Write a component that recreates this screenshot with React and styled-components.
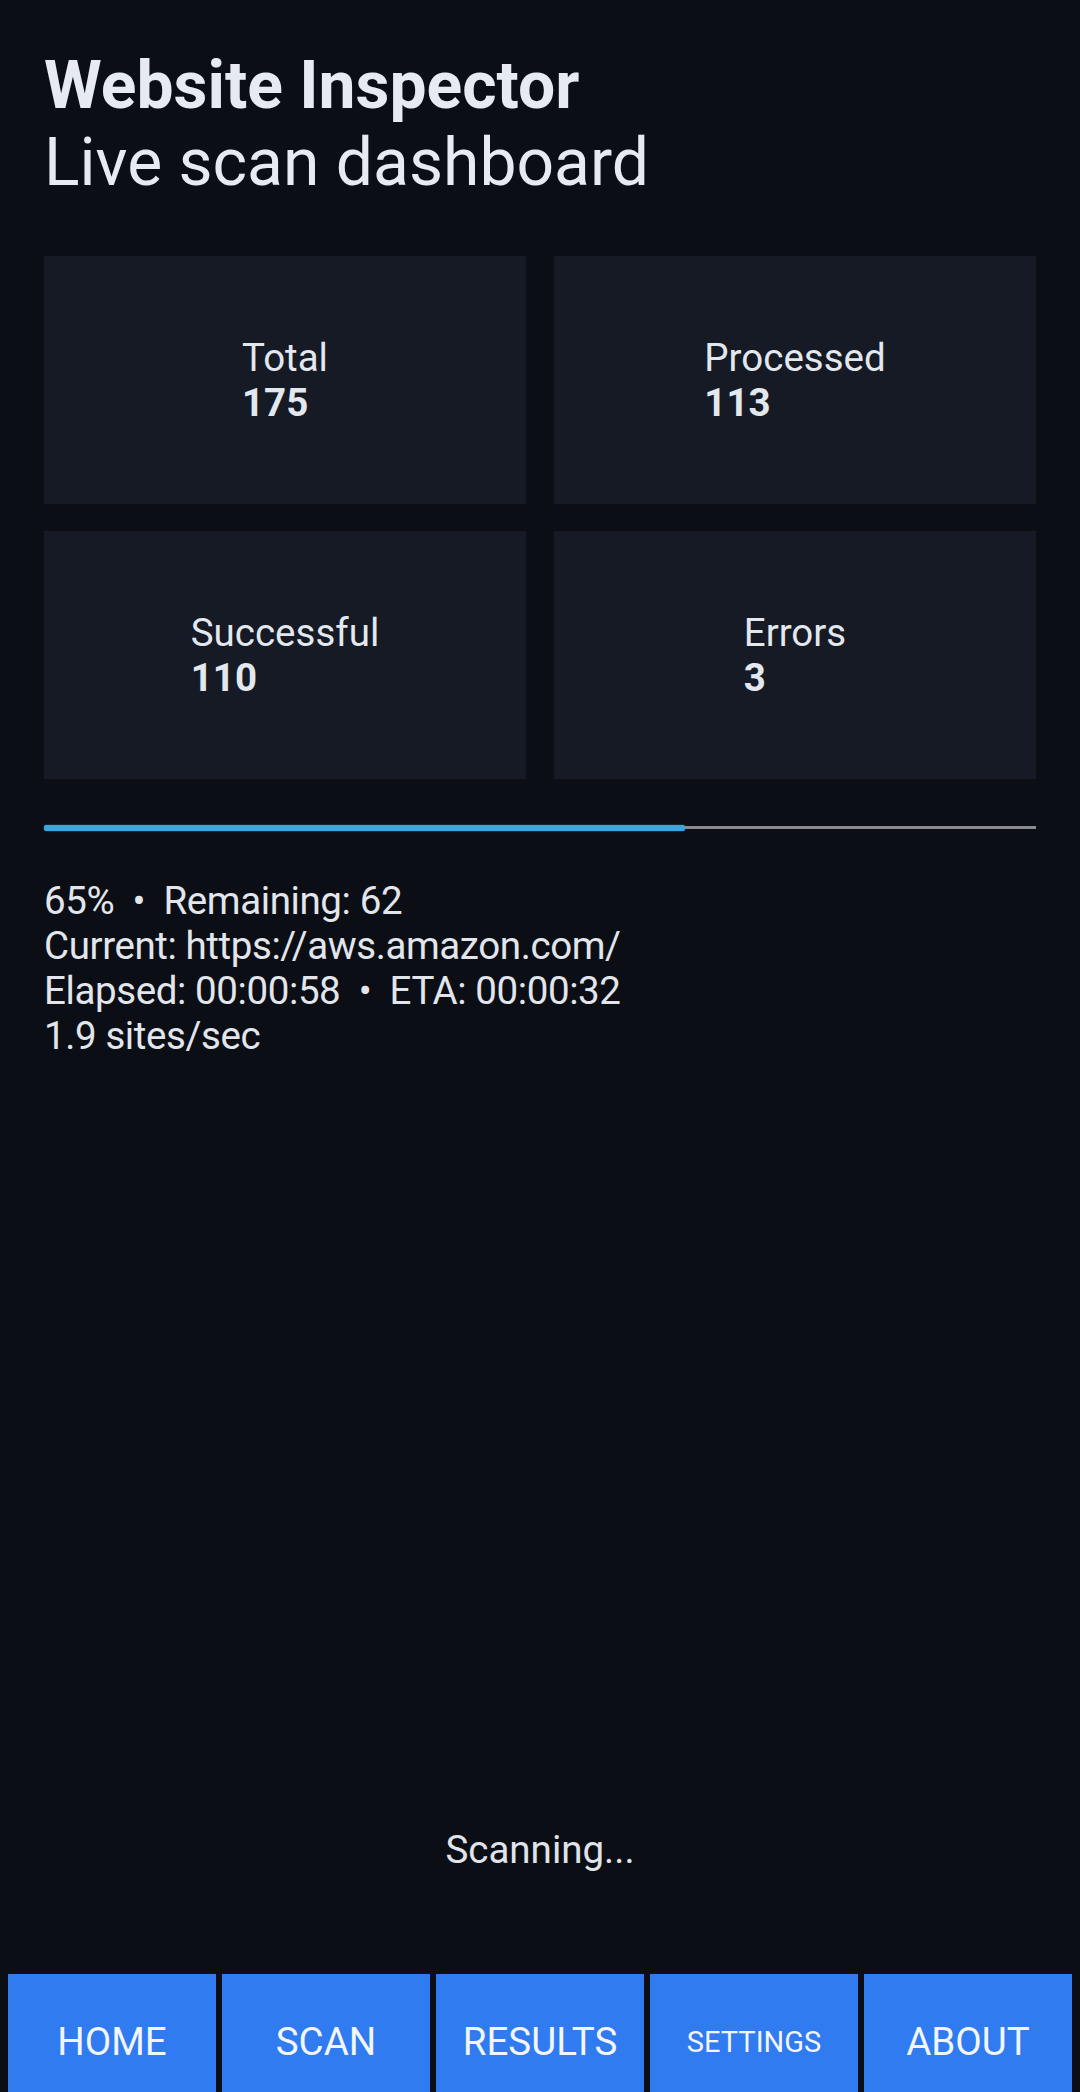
import React from "react";
import styled, { createGlobalStyle } from "styled-components";

const Global = createGlobalStyle`
  html, body { margin: 0; padding: 0; background: #0b0e14; }
  body { font-family: Roboto, "Noto Sans", "Liberation Sans", sans-serif; }
  * { box-sizing: border-box; }
`;

const Screen = styled.div`
  width: 1080px;
  height: 2092px;
  overflow: hidden;
  background: #0b0e14;
  color: #e4e8ef;
  display: flex;
  flex-direction: column;
  padding-top: 47px;
`;

const Content = styled.main`
  padding: 0 44px;
  display: flex;
  flex-direction: column;
`;

const Title = styled.h1`
  margin: 0;
  font-size: 66px;
  font-weight: 700;
  line-height: 77px;
  color: #e6eaf2;
`;

const Subtitle = styled.h2`
  margin: 0;
  font-size: 66px;
  font-weight: 400;
  line-height: 78px;
  color: #e6eaf2;
`;

const StatsGrid = styled.section`
  margin-top: 54px;
  display: grid;
  grid-template-columns: 1fr 1fr;
  column-gap: 28px;
  row-gap: 27px;
`;

const Card = styled.div`
  height: 248px;
  background: #151a24;
  display: flex;
  align-items: center;
  justify-content: center;
`;

const CardBody = styled.div`
  display: flex;
  flex-direction: column;
  align-items: flex-start;
  font-size: 38.5px;
  line-height: 45px;
  color: #e3e7ee;
`;

const Label = styled.span`
  font-weight: 400;
`;

const Value = styled.span`
  font-weight: 700;
`;

const Progress = styled.div`
  margin-top: 45px;
  height: 7px;
  display: flex;
  align-items: center;
`;

const Fill = styled.div`
  height: 6px;
  background: #3aa6dd;
  border-radius: 2px;
  box-shadow: 0 0 2px rgba(58, 166, 221, 0.6);
`;

const Track = styled.div`
  flex: 1;
  height: 3px;
  background: #8a8b8d;
`;

const Status = styled.div`
  margin-top: 47px;
  display: flex;
  flex-direction: column;
  font-size: 38.5px;
  line-height: 45px;
  letter-spacing: -0.4px;
  color: #e2e6ec;
  white-space: pre;
`;

const Spacer = styled.div`
  flex: 1;
`;

const Scanning = styled.div`
  text-align: center;
  font-size: 38.5px;
  line-height: 45px;
  color: #e0e4ea;
  margin-bottom: 102px;
`;

const Nav = styled.nav`
  display: flex;
  gap: 6px;
  padding: 0 8px;
  height: 118px;
  flex-shrink: 0;
`;

const NavButton = styled.button`
  flex: 1;
  border: none;
  border-radius: 0;
  margin: 0;
  background: #2f7bef;
  color: #f2f5fb;
  font-family: Roboto, "Noto Sans", "Liberation Sans", sans-serif;
  font-size: ${(p) => (p.$small ? "29px" : "38.5px")};
  line-height: 45px;
  padding: ${(p) => (p.$small ? "46px 0 0" : "45px 0 0")};
  display: flex;
  align-items: flex-start;
  justify-content: center;
  text-transform: uppercase;
`;

const stats = [
  { label: "Total", value: 175 },
  { label: "Processed", value: 113 },
  { label: "Successful", value: 110 },
  { label: "Errors", value: 3 },
];

const navItems = [
  { label: "Home" },
  { label: "Scan" },
  { label: "Results" },
  { label: "Settings", small: true },
  { label: "About" },
];

export default function App() {
  const percent = (113 / 175) * 100;
  return (
    <>
      <Global />
      <Screen>
        <Content>
          <Title>Website Inspector</Title>
          <Subtitle>Live scan dashboard</Subtitle>
          <StatsGrid>
            {stats.map((s) => (
              <Card key={s.label}>
                <CardBody>
                  <Label>{s.label}</Label>
                  <Value>{s.value}</Value>
                </CardBody>
              </Card>
            ))}
          </StatsGrid>
          <Progress>
            <Fill style={{ width: `${percent}%` }} />
            <Track />
          </Progress>
          <Status>
            <span>{"65%  •  Remaining: 62"}</span>
            <span>Current: https://aws.amazon.com/</span>
            <span>{"Elapsed: 00:00:58  •  ETA: 00:00:32"}</span>
            <span>1.9 sites/sec</span>
          </Status>
        </Content>
        <Spacer />
        <Scanning>Scanning...</Scanning>
        <Nav>
          {navItems.map((n) => (
            <NavButton key={n.label} $small={n.small}>
              {n.label}
            </NavButton>
          ))}
        </Nav>
      </Screen>
    </>
  );
}
